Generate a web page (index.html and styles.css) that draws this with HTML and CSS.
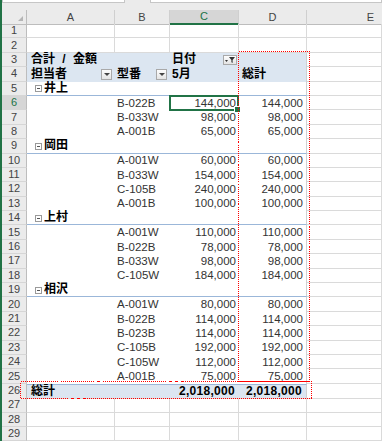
FILE: index.html
```html
<!DOCTYPE html>
<html lang="ja">
<head>
<meta charset="utf-8">
<title>Pivot</title>
<link rel="stylesheet" href="styles.css">
</head>
<body>
<div class="app">
  <div class="topbar"><div class="fbox name"></div><div class="fbox formula"></div></div>
  <div class="r hdr">
    <div class="corner"></div>
    <div class="ch">A</div><div class="ch">B</div><div class="ch sel">C</div><div class="ch">D</div><div class="ch e">E</div>
  </div>
  <div class="r"><div class="h">1</div><div class="c"></div><div class="c"></div><div class="c"></div><div class="c"></div><div class="c"></div></div>
  <div class="r"><div class="h">2</div><div class="c"></div><div class="c"></div><div class="c"></div><div class="c"></div><div class="c"></div></div>
  <div class="r"><div class="h">3</div><div class="p band b a ws">合計 / 金額</div><div class="p band"></div><div class="p band b m">日付<span class="fb"><svg width="12" height="8" viewBox="0 0 12 8"><path d="M1 4h3l-1.5 2z" fill="#333"/><path d="M5 1h6l-2.4 3v3l-1.2-.8v-2.2z" fill="#333"/></svg></span></div><div class="p band d"></div><div class="c"></div></div>
  <div class="r"><div class="h">4</div><div class="p band b a">担当者<span class="dd"></span></div><div class="p band b m">型番<span class="dd"></span></div><div class="p band b m">5月</div><div class="p band b d dl">総計</div><div class="c"></div></div>
  <div class="r"><div class="h">5</div><div class="p g b a"><span class="tog"></span>井上</div><div class="p g"></div><div class="p g"></div><div class="p g d"></div><div class="c"></div></div>
  <div class="r"><div class="h sel">6</div><div class="p"></div><div class="p m">B-022B</div><div class="p n selc">144,000</div><div class="p n d">144,000</div><div class="c"></div></div>
  <div class="r"><div class="h">7</div><div class="p"></div><div class="p m">B-033W</div><div class="p n">98,000</div><div class="p n d">98,000</div><div class="c"></div></div>
  <div class="r"><div class="h">8</div><div class="p"></div><div class="p m">A-001B</div><div class="p n">65,000</div><div class="p n d">65,000</div><div class="c"></div></div>
  <div class="r"><div class="h">9</div><div class="p g b a"><span class="tog"></span>岡田</div><div class="p g"></div><div class="p g"></div><div class="p g d"></div><div class="c"></div></div>
  <div class="r"><div class="h">10</div><div class="p"></div><div class="p m">A-001W</div><div class="p n">60,000</div><div class="p n d">60,000</div><div class="c"></div></div>
  <div class="r"><div class="h">11</div><div class="p"></div><div class="p m">B-033W</div><div class="p n">154,000</div><div class="p n d">154,000</div><div class="c"></div></div>
  <div class="r"><div class="h">12</div><div class="p"></div><div class="p m">C-105B</div><div class="p n">240,000</div><div class="p n d">240,000</div><div class="c"></div></div>
  <div class="r"><div class="h">13</div><div class="p"></div><div class="p m">A-001B</div><div class="p n">100,000</div><div class="p n d">100,000</div><div class="c"></div></div>
  <div class="r"><div class="h">14</div><div class="p g b a"><span class="tog"></span>上村</div><div class="p g"></div><div class="p g"></div><div class="p g d"></div><div class="c"></div></div>
  <div class="r"><div class="h">15</div><div class="p"></div><div class="p m">A-001W</div><div class="p n">110,000</div><div class="p n d">110,000</div><div class="c"></div></div>
  <div class="r"><div class="h">16</div><div class="p"></div><div class="p m">B-022B</div><div class="p n">78,000</div><div class="p n d">78,000</div><div class="c"></div></div>
  <div class="r"><div class="h">17</div><div class="p"></div><div class="p m">B-033W</div><div class="p n">98,000</div><div class="p n d">98,000</div><div class="c"></div></div>
  <div class="r"><div class="h">18</div><div class="p"></div><div class="p m">C-105W</div><div class="p n">184,000</div><div class="p n d">184,000</div><div class="c"></div></div>
  <div class="r"><div class="h">19</div><div class="p g b a"><span class="tog"></span>相沢</div><div class="p g"></div><div class="p g"></div><div class="p g d"></div><div class="c"></div></div>
  <div class="r"><div class="h">20</div><div class="p"></div><div class="p m">A-001W</div><div class="p n">80,000</div><div class="p n d">80,000</div><div class="c"></div></div>
  <div class="r"><div class="h">21</div><div class="p"></div><div class="p m">B-022B</div><div class="p n">114,000</div><div class="p n d">114,000</div><div class="c"></div></div>
  <div class="r"><div class="h">22</div><div class="p"></div><div class="p m">B-023B</div><div class="p n">114,000</div><div class="p n d">114,000</div><div class="c"></div></div>
  <div class="r"><div class="h">23</div><div class="p"></div><div class="p m">C-105B</div><div class="p n">192,000</div><div class="p n d">192,000</div><div class="c"></div></div>
  <div class="r"><div class="h">24</div><div class="p"></div><div class="p m">C-105W</div><div class="p n">112,000</div><div class="p n d">112,000</div><div class="c"></div></div>
  <div class="r"><div class="h">25</div><div class="p"></div><div class="p m">A-001B</div><div class="p n">75,000</div><div class="p n d">75,000</div><div class="c"></div></div>
  <div class="r"><div class="h">26</div><div class="p band t b a">総計</div><div class="p band t"></div><div class="p band t n b">2,018,000</div><div class="p band t n b d">2,018,000</div><div class="c"></div></div>
  <div class="r"><div class="h">27</div><div class="c"></div><div class="c"></div><div class="c"></div><div class="c"></div><div class="c"></div></div>
  <div class="r"><div class="h">28</div><div class="c"></div><div class="c"></div><div class="c"></div><div class="c"></div><div class="c"></div></div>
  <div class="r"><div class="h">29</div><div class="c"></div><div class="c"></div><div class="c"></div><div class="c"></div><div class="c"></div></div>
  <svg class="marq marq-col" width="72" height="331" viewBox="0 0 72 331"><rect x="0.5" y="0.5" width="71" height="330" fill="none" stroke="#ff0000" stroke-width="1" stroke-dasharray="1 1" shape-rendering="crispEdges"/></svg>
  <svg class="marq marq-row" width="292" height="18" viewBox="0 0 292 18"><rect x="0.5" y="0.5" width="291" height="17" fill="none" stroke="#ff0000" stroke-width="1" stroke-dasharray="1 1" shape-rendering="crispEdges"/></svg>
</div>
</body>
</html>
```
FILE: styles.css
```css
* { box-sizing: border-box; margin: 0; padding: 0; }
html, body { width: 382px; height: 441px; overflow: hidden; background: #fff; }
body {
  font-family: "Liberation Sans", "Noto Sans CJK JP", sans-serif;
  font-size: 11.5px;
  color: #333;
}
.app {
  position: relative;
  height: 441px;
  border-left: 2px solid #217346;
}
.topbar {
  height: 10px;
  background: #ebebeb;
  display: flex;
  gap: 25px;
}
.fbox {
  height: 3px;
  background: #fff;
  border: 1px solid #c6c6c6;
  border-top: none;
}
.fbox.name { width: 123px; }
.fbox.formula { flex: 1; }

.r {
  display: grid;
  grid-template-columns: 25px 88px 55px 69px 68px 1fr;
  height: 14.4px;
}
.r.hdr { height: 14px; }
.r > div {
  display: flex;
  align-items: center;
  white-space: nowrap;
  line-height: 13px;
  min-width: 0;
}

.corner {
  background: #ebebeb;
  border-right: 1px solid #bdbdbd;
  border-bottom: 1px solid #bdbdbd;
  position: relative;
}
.corner::after {
  content: "";
  position: absolute;
  right: 3px;
  bottom: 3px;
  border-left: 5px solid transparent;
  border-bottom: 5px solid #b5b5b5;
}
.ch {
  background: #ebebeb;
  border-right: 1px solid #cfcfcf;
  border-bottom: 1px solid #bdbdbd;
  justify-content: center;
  color: #444;
  font-size: 11px;
}
.ch.e { justify-content: flex-end; padding-right: 8px; border-right: none; }
.ch.sel {
  background: #d6d6d6;
  color: #217346;
  border-bottom: 2px solid #217346;
}
.h {
  background: #ebebeb;
  border-right: 1px solid #bdbdbd;
  border-bottom: 1px solid #d6d6d6;
  justify-content: center;
  color: #444;
  font-size: 11px;
}
.h.sel { background: #d6d6d6; color: #217346; }

.c {
  border-right: 1px solid #dadada;
  border-bottom: 1px solid #dadada;
}
.p.d { border-right: 1px solid #d0d0d0; }
.band { background: #dce6f1; }
.b { font-weight: bold; color: #000; font-size: 12px; }
.a { padding-left: 4px; }
.m { padding-left: 2px; }
.dl { padding-left: 3px; }
.ws { word-spacing: 4px; }
.n { justify-content: flex-end; padding-right: 3px; }
.g { border-bottom: 1px solid #9bb7d9; }
.t { border-top: 1px solid #9bb7d9; border-bottom: 1px solid #dadada; }
.b.n { letter-spacing: 0.3px; padding-right: 4px; }

.tog {
  display: inline-block;
  width: 7px;
  height: 7px;
  border: 1px solid #9a9a9a;
  background: #fff;
  position: relative;
  margin: 1px 2px 0 4px;
}
.tog::after {
  content: "";
  position: absolute;
  left: 1px;
  top: 2px;
  width: 3px;
  height: 1px;
  background: #555;
}

.dd {
  margin-left: auto;
  margin-right: 3px;
  width: 11px;
  height: 11px;
  border: 1px solid #a9a9a9;
  background: linear-gradient(#fdfdfd, #e4e4e4);
  position: relative;
}
.dd::after {
  content: "";
  position: absolute;
  left: 2px;
  top: 3px;
  border-left: 3px solid transparent;
  border-right: 3px solid transparent;
  border-top: 3px solid #444;
}
.fb {
  margin-left: auto;
  margin-right: 2px;
  width: 14px;
  height: 10px;
  border: 1px solid #a9a9a9;
  background: linear-gradient(#fdfdfd, #e4e4e4);
  display: flex;
  align-items: center;
  justify-content: center;
}
.fb svg { display: block; }

.selc { position: relative; }
.selc::after {
  content: "";
  position: absolute;
  left: -1px;
  right: 0;
  top: -1px;
  bottom: -1px;
  border: 2px solid #217346;
  z-index: 3;
}
.selc::before {
  content: "";
  position: absolute;
  right: -2px;
  bottom: -3px;
  width: 5px;
  height: 5px;
  background: #217346;
  border: 1px solid #fff;
  z-index: 4;
}

.marq {
  position: absolute;
  z-index: 5;
  display: block;
}
.marq-col { left: 236px; top: 51px; }
.marq-row { left: 18px; top: 381px; }
```
